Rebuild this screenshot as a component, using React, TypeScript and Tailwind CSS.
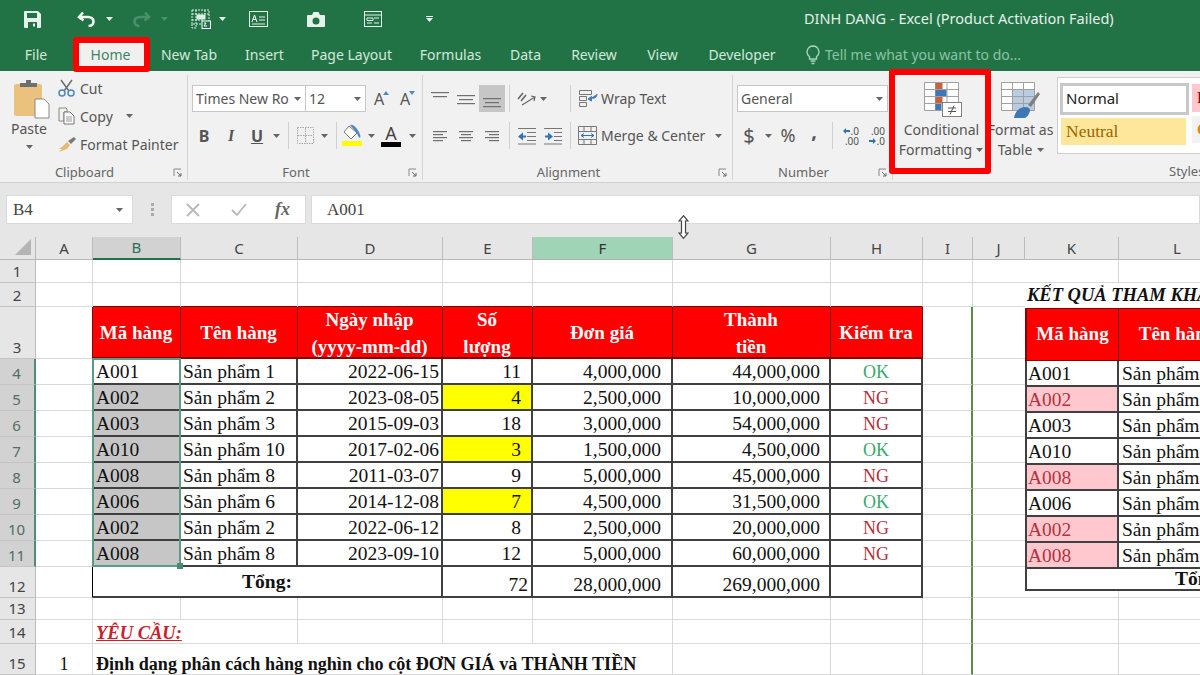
import React from 'react';

const serif = "font-['Liberation_Serif',serif]";
const gridLine = 'border-r border-b border-[#d9d9d9]';
const black = 'border-r-2 border-b-2 border-[#404040]';

const rows = [
  ['A001', 'Sản phẩm 1', '2022-06-15', '11', '4,000,000', '44,000,000', 'OK'],
  ['A002', 'Sản phẩm 2', '2023-08-05', '4', '2,500,000', '10,000,000', 'NG'],
  ['A003', 'Sản phẩm 3', '2015-09-03', '18', '3,000,000', '54,000,000', 'NG'],
  ['A010', 'Sản phẩm 10', '2017-02-06', '3', '1,500,000', '4,500,000', 'OK'],
  ['A008', 'Sản phẩm 8', '2011-03-07', '9', '5,000,000', '45,000,000', 'NG'],
  ['A006', 'Sản phẩm 6', '2014-12-08', '7', '4,500,000', '31,500,000', 'OK'],
  ['A002', 'Sản phẩm 2', '2022-06-12', '8', '2,500,000', '20,000,000', 'NG'],
  ['A008', 'Sản phẩm 8', '2023-09-10', '12', '5,000,000', '60,000,000', 'NG'],
];

const lookup = [
  ['A001', false],
  ['A002', true],
  ['A003', false],
  ['A010', false],
  ['A008', true],
  ['A006', false],
  ['A002', true],
  ['A008', true],
] as const;

const tabs = [
  { name: 'New Tab', w: 'w-[86px]' },
  { name: 'Insert', w: 'w-[65px]' },
  { name: 'Page Layout', w: 'w-[109px]' },
  { name: 'Formulas', w: 'w-[89px]' },
  { name: 'Data', w: 'w-[61px]' },
  { name: 'Review', w: 'w-[76px]' },
  { name: 'View', w: 'w-[61px]' },
  { name: 'Developer', w: 'w-[98px]' },
];

function Caret({ color = '#666' }: { color?: string }) {
  return (
    <svg width="7" height="4" viewBox="0 0 7 4" className="shrink-0">
      <path d="M0 0h7L3.5 4z" fill={color} />
    </svg>
  );
}

function Launcher() {
  return (
    <svg width="10" height="10" viewBox="0 0 10 10" className="justify-self-end mr-[4px]">
      <path d="M1 8V1h7" fill="none" stroke="#888" />
      <path d="M4 4l4 4M8 5v3H5" fill="none" stroke="#666" />
    </svg>
  );
}

function Divider() {
  return <div className="w-px h-[27px] bg-[#d0d0d0] shrink-0" />;
}

function Lines({ rows }: { rows: number[][] }) {
  return (
    <svg width="20" height="20" viewBox="0 0 20 20">
      {rows.map(([x, y, w], i) => (
        <rect key={i} x={x} y={y} width={w} height="1.2" fill="#707070" />
      ))}
    </svg>
  );
}

function Tool({ active, children }: { active?: boolean; children: React.ReactNode }) {
  return (
    <div className={`w-[26px] h-[27px] flex items-center justify-center shrink-0 ${active ? 'bg-[#c6c6c6]' : ''}`}>
      {children}
    </div>
  );
}

function Group({ label, launcher, className, children }: { label: string; launcher?: boolean; className: string; children: React.ReactNode }) {
  return (
    <div className={`h-[105px] flex flex-col border-r border-[#d4d4d4] shrink-0 ${className}`}>
      <div className="h-[88px]">{children}</div>
      <div className="h-[16px] grid grid-cols-[minmax(0,1fr)_auto_minmax(0,1fr)_18px] items-center text-[13px] text-[#666]">
        <span />
        <span>{label}</span>
        <span />
        {launcher && <Launcher />}
      </div>
    </div>
  );
}

function TitleBar() {
  return (
    <div className="h-[38px] bg-[#217346] flex items-center text-white">
      <svg width="17" height="17" viewBox="0 0 17 17" className="ml-[24px] shrink-0">
        <path fillRule="evenodd" d="M1 0h13l3 3v13a1 1 0 0 1-1 1H1a1 1 0 0 1-1-1V1a1 1 0 0 1 1-1zm2 2v5h10V2zM4 11v6h9v-6z" fill="#e8f2ec" />
        <rect x="9" y="12.5" width="2" height="3" fill="#e8f2ec" />
      </svg>
      <svg width="19" height="17" viewBox="0 0 19 17" className="ml-[36px] shrink-0">
        <path d="M6 1.5L2 6l4.5 3.5M2.5 6H11c3.5 0 5.5 2 5.5 4.5S14.5 15 11.5 15" fill="none" stroke="#f2f7f4" strokeWidth="2.6" />
      </svg>
      <div className="ml-[10px]"><Caret color="#e8f2ec" /></div>
      <svg width="19" height="17" viewBox="0 0 19 17" className="ml-[19px] shrink-0">
        <path d="M13 1.5L17 6l-4.5 3.5M16.5 6H8c-3.5 0-5.5 2-5.5 4.5S4.5 15 7.5 15" fill="none" stroke="#4c8f6c" strokeWidth="2.6" />
      </svg>
      <div className="ml-[10px]"><Caret color="#4c8f6c" /></div>
      <svg width="20" height="20" viewBox="0 0 20 20" className="ml-[23px] shrink-0">
        <path d="M1 1h17v14H1zM1 5h17M1 11h11M5 1v18M14 1v4M1 15v4h4" fill="none" stroke="#dfeee6" strokeDasharray="2 1" />
        <rect x="5.5" y="5.5" width="9" height="5" fill="#dfeee6" />
        <rect x="11" y="12" width="8.5" height="7.5" fill="#217346" stroke="#fff" />
        <path d="M13 14h2l-2 3h3" fill="none" stroke="#fff" />
      </svg>
      <div className="ml-[8px]"><Caret color="#e8f2ec" /></div>
      <svg width="19" height="16" viewBox="0 0 19 16" className="ml-[23px] shrink-0">
        <rect x=".5" y=".5" width="18" height="15" fill="none" stroke="#e8f2ec" />
        <path d="M3 11l2.5-7L8 11M4 8.5h3" fill="none" stroke="#fff" />
        <path d="M10 6h6M10 9h6M3 13h13" stroke="#e8f2ec" />
      </svg>
      <svg width="18" height="15" viewBox="0 0 18 15" className="ml-[39px] shrink-0">
        <path fillRule="evenodd" d="M1 3h4l1.5-3h5L13 3h4a1 1 0 0 1 1 1v10a1 1 0 0 1-1 1H1a1 1 0 0 1-1-1V4a1 1 0 0 1 1-1zm8 2.5a3.5 3.5 0 1 0 0 7 3.5 3.5 0 0 0 0-7z" fill="#e8f2ec" />
      </svg>
      <svg width="18" height="16" viewBox="0 0 18 16" className="ml-[39px] shrink-0">
        <rect x=".5" y=".5" width="17" height="15" fill="none" stroke="#e8f2ec" />
        <path d="M1 4h16M3 7h6v2.5H3zM10 7h5M3 12h5M10 12h5" fill="none" stroke="#e8f2ec" />
      </svg>
      <div className="ml-[44px] flex flex-col items-center gap-[1px]">
        <div className="w-[7px] h-px bg-[#e8f2ec]" />
        <Caret color="#e8f2ec" />
      </div>
      <span className="ml-[371px] text-[14.5px] text-[#e4f0e9] whitespace-nowrap">DINH DANG - Excel (Product Activation Failed)</span>
    </div>
  );
}

function TabBar() {
  return (
    <div className="h-[33px] bg-[#217346] flex items-center text-[14px] text-[#d3e8da]">
      <div className="ml-[10px] w-[52px] text-center">File</div>
      <div className="ml-[11px] w-[73px] h-full relative flex items-center">
        <div className="absolute left-0 top-[-1px] w-[77px] h-[35px] border-[6px] border-[#f00] rounded-[3px] bg-[#f0f0f0]" />
        <span className="relative w-full text-center pl-[2px] text-[#3f8563]">Home</span>
      </div>
      {tabs.map((t) => (
        <div key={t.name} className={`${t.w} text-center`}>{t.name}</div>
      ))}
      <svg width="14" height="20" viewBox="0 0 14 20" className="ml-[15px] shrink-0">
        <path d="M7 1a6 6 0 0 0-3.5 10.8V14h7v-2.2A6 6 0 0 0 7 1zM4.5 16h5M5.5 18.500h3" fill="none" stroke="#a5d3b8" strokeWidth="1.4" />
      </svg>
      <span className="ml-[5px] text-[#8ac3a2] whitespace-nowrap">Tell me what you want to do...</span>
    </div>
  );
}

function Clipboard() {
  return (
    <Group label="Clipboard" launcher className="w-[188px]">
      <div className="flex h-full">
        <div className="w-[58px] flex flex-col items-center pt-[4px]">
          <svg width="36" height="40" viewBox="0 0 36 40" className="ml-[6px]">
            <rect x="0" y="5" width="28" height="32" rx="2" fill="#eac27d" />
            <path d="M6 8V4h6V1h5v3h6v4z" fill="#6f6f6f" />
            <path d="M21 20h9l5 5v14H21z" fill="#fff" stroke="#888" />
          </svg>
          <span className="text-[14px] leading-[20px] text-[#555]">Paste</span>
          <div className="mt-[6px]"><Caret /></div>
        </div>
        <div className="flex flex-col -mt-[1px] text-[14px] text-[#555]">
          <div className="h-[28px] flex items-center gap-[5px]">
            <svg width="17" height="18" viewBox="0 0 17 18">
              <path d="M3 1l8 11M14 1L6 12" stroke="#6f6f6f" strokeWidth="1.5" fill="none" />
              <circle cx="4" cy="14" r="3" fill="none" stroke="#4f86c0" strokeWidth="1.5" />
              <circle cx="13" cy="14" r="3" fill="none" stroke="#4f86c0" strokeWidth="1.5" />
            </svg>
            <span>Cut</span>
          </div>
          <div className="h-[28px] flex items-center gap-[5px]">
            <svg width="17" height="18" viewBox="0 0 17 18">
              <path d="M1 1h7l1 1v3H6v9H1z" fill="#f1f1f1" stroke="#888" />
              <path d="M6 5h6l4 4v8H6z" fill="#fff" stroke="#777" />
              <path d="M8 10h6M8 12h6M8 14h6" stroke="#999" />
            </svg>
            <span>Copy</span>
            <div className="ml-[8px]"><Caret /></div>
          </div>
          <div className="h-[28px] flex items-center gap-[4px]">
            <svg width="18" height="17" viewBox="0 0 18 17">
              <path d="M10 5l3 3 5-5-2-2z" fill="#7a7a7a" />
              <path d="M9 6l3 3-3 4-8 3 3-3-3 0 4-3z" fill="#e8b96f" />
            </svg>
            <span>Format Painter</span>
          </div>
        </div>
      </div>
    </Group>
  );
}

function FontGroup() {
  return (
    <Group label="Font" launcher className="w-[235px]">
      <div className="pt-[10px] pl-[4px]">
        <div className="flex items-center h-[27px] text-[14px] text-[#555]">
          <div className="w-[114px] h-full bg-white border border-[#c6c6c6] flex items-center justify-between pl-[3px] pr-[4px]">
            <span className="whitespace-nowrap">Times New Ro</span>
            <Caret />
          </div>
          <div className="w-[60px] h-full bg-white border border-l-0 border-[#c6c6c6] flex items-center justify-between pl-[3px] pr-[4px]">
            <span>12</span>
            <Caret />
          </div>
          <div className="ml-[8px] w-[16px] flex items-start text-[16px] leading-none">
            <span>A</span>
            <svg width="6" height="4" viewBox="0 0 6 4" className="-ml-[1px]"><path d="M0 4l3-4 3 4z" fill="#4f86c0" /></svg>
          </div>
          <div className="ml-[10px] w-[16px] flex items-start text-[16px] leading-none">
            <span>A</span>
            <svg width="6" height="4" viewBox="0 0 6 4" className="-ml-[1px]"><path d="M0 0l3 4 3-4z" fill="#4f86c0" /></svg>
          </div>
        </div>
        <div className="flex items-center h-[27px] mt-[10px] -ml-[1px] text-[#555]">
          <Tool><span className="font-bold text-[16px]">B</span></Tool>
          <div className="w-px" />
          <Tool><span className={`italic font-bold text-[16px] ${serif}`}>I</span></Tool>
          <Tool><span className="font-bold text-[16px] underline">U</span></Tool>
          <div className="w-[12px] flex justify-center"><Caret /></div>
          <div className="ml-[6px]"><Divider /></div>
          <div className="ml-[3px]">
            <Tool>
              <svg width="17" height="17" viewBox="0 0 17 17">
                <path d="M.5.5h16v16H.5zM8.5 1v15M1 8.5h15" fill="none" stroke="#a8a8a8" strokeDasharray="1.5 1" />
              </svg>
            </Tool>
          </div>
          <div className="w-[12px] flex justify-center"><Caret /></div>
          <div className="ml-[6px]"><Divider /></div>
          <div className="ml-[2px]">
            <Tool>
              <svg width="22" height="24" viewBox="0 0 22 24">
                <path d="M8 2l8 7-6 6-7-7z" fill="#fff" stroke="#777" />
                <path d="M9 1c3-1 6 2 9 7 1 3 2 4 1 6-2-1-2-3-3-5z" fill="#4f86c0" />
                <rect x="1" y="17" width="20" height="5" fill="#ff0" />
              </svg>
            </Tool>
          </div>
          <div className="w-[13px] flex justify-center"><Caret /></div>
          <Tool>
            <div className="flex flex-col items-center text-[#444]">
              <span className="text-[18px] leading-[18px]">A</span>
              <div className="w-[20px] h-[5px] bg-black" />
            </div>
          </Tool>
          <div className="w-[16px] flex justify-center"><Caret /></div>
        </div>
      </div>
    </Group>
  );
}

function Alignment() {
  return (
    <Group label="Alignment" launcher className="w-[310px]">
      <div className="pt-[10px] pl-[4px] text-[14px] text-[#555]">
        <div className="flex items-center h-[27px]">
          <Tool><Lines rows={[[1, 3, 18], [3, 7, 14]]} /></Tool>
          <Tool><Lines rows={[[1, 6, 18], [3, 10, 14], [1, 14, 18]]} /></Tool>
          <Tool active><Lines rows={[[1, 9, 18], [3, 13, 14], [1, 17, 18]]} /></Tool>
          <div className="ml-[4px]"><Divider /></div>
          <svg width="19" height="19" viewBox="0 0 19 19" className="ml-[7px]">
            <path d="M1 10l5-6M4 12l5-6" stroke="#666" strokeWidth="1.6" />
            <path d="M5 16L18 8M14 7l4 1-1 4" fill="none" stroke="#666" strokeWidth="1.2" />
          </svg>
          <div className="ml-[4px]"><Caret /></div>
          <div className="ml-[23px]"><Divider /></div>
          <svg width="20" height="20" viewBox="0 0 20 20" className="ml-[8px]">
            <path d="M.5 1.5h12v4H.5zM.5 7.5h7v4h-7zM.5 13.5h7v4h-7zM8 5.5h4" fill="none" stroke="#777" />
            <path d="M12 9c5 1 6-2 6-4M9 10l3.5-2.5V12z" fill="#3e7cbb" stroke="#3e7cbb" />
          </svg>
          <span className="ml-[2px]">Wrap Text</span>
        </div>
        <div className="flex items-center h-[27px] mt-[10px]">
          <Tool><Lines rows={[[3, 5, 14], [3, 8, 10], [3, 11, 14], [3, 14, 10]]} /></Tool>
          <Tool><Lines rows={[[3, 5, 14], [5, 8, 10], [3, 11, 14], [5, 14, 10]]} /></Tool>
          <Tool><Lines rows={[[3, 5, 14], [7, 8, 10], [3, 11, 14], [7, 14, 10]]} /></Tool>
          <div className="ml-[4px]"><Divider /></div>
          <svg width="18" height="18" viewBox="0 0 18 18" className="ml-[8px]">
            <path d="M0 1.5h18M9 5.5h9M9 9.5h9M9 13.5h9M0 17h18" stroke="#777" />
            <path d="M0 9.5l5-4v3h3v2H5v3z" fill="#2f74b5" />
          </svg>
          <svg width="18" height="18" viewBox="0 0 18 18" className="ml-[8px]">
            <path d="M0 1.5h18M10 5.5h8M10 9.5h8M10 13.5h8M0 17h18" stroke="#777" />
            <path d="M9 9.5l-5-4v3H1v2h3v3z" fill="#2f74b5" />
          </svg>
          <div className="ml-[8px]"><Divider /></div>
          <svg width="19" height="19" viewBox="0 0 19 19" className="ml-[7px]">
            <path d="M.5.5h18v18H.5zM1 5.5h17M1 13.5h17M6 1v4M13 1v4M6 14v4M13 14v4" fill="none" stroke="#777" />
            <path d="M3 9.5h13M3 9.5l3-2M3 9.5l3 2M16 9.5l-3-2M16 9.5l-3 2" fill="none" stroke="#2f74b5" />
          </svg>
          <span className="ml-[4px] whitespace-nowrap">Merge &amp; Center</span>
          <div className="ml-[10px]"><Caret /></div>
        </div>
      </div>
    </Group>
  );
}

function ArrowSmall({ flip }: { flip?: boolean }) {
  return (
    <svg width="7" height="6" viewBox="0 0 7 6" className={flip ? 'rotate-180 mr-[1px]' : 'mr-[1px]'}>
      <path d="M0 3l3-3v2h4v2H3v2z" fill="#2f74b5" />
    </svg>
  );
}

function NumberGroup() {
  return (
    <Group label="Number" launcher className="w-[160px]">
      <div className="pt-[10px] pl-[4px] text-[#555]">
        <div className="w-[151px] h-[27px] bg-white border border-[#c6c6c6] flex items-center justify-between pl-[3px] pr-[4px] text-[14px]">
          <span>General</span>
          <Caret />
        </div>
        <div className="flex items-center h-[27px] mt-[10px]">
          <div className="w-[24px] text-center text-[20px]">$</div>
          <div className="w-[14px] flex justify-center"><Caret /></div>
          <div className="w-[26px] text-center text-[18px]">%</div>
          <div className="w-[26px] text-center text-[20px] font-bold leading-[16px] pb-[10px]">,</div>
          <div className="ml-[5px]"><Divider /></div>
          <div className="ml-[9px] w-[17px] flex flex-col items-end text-[10px] leading-[10px] whitespace-nowrap">
            <span className="flex items-center"><ArrowSmall />.0</span>
            <span>.00</span>
          </div>
          <div className="ml-[9px] w-[17px] flex flex-col items-end text-[10px] leading-[10px] whitespace-nowrap">
            <span>.00</span>
            <span className="flex items-center"><ArrowSmall flip />.0</span>
          </div>
        </div>
      </div>
    </Group>
  );
}

function Styles() {
  return (
    <div className="flex text-[14px] leading-[20px] text-[#555] h-[105px]">
      <div className="relative w-[92px] shrink-0 flex flex-col items-center pt-[7px] pl-[5px]">
        <div className="absolute left-[-4px] top-[-6px] w-[102px] h-[105px] border-[6px] border-[#f00] rounded-[3px]" />
        <svg width="38" height="36" viewBox="0 0 38 36" className="ml-[3px] mb-[2px]">
          <path d="M.5.5h34v28H.5zM11.5 1v27M23 1v27M1 7.5h33M1 14.5h33M1 21.5h33" fill="#fff" stroke="#a0a0a0" />
          <rect x="11.5" y="1" width="7" height="6" fill="#c9623c" />
          <rect x="11.5" y="8" width="11" height="6" fill="#3d78b5" />
          <rect x="11.5" y="15" width="7" height="6" fill="#c9623c" />
          <rect x="11.5" y="22" width="6" height="6" fill="#3d78b5" />
          <rect x="18.5" y="20.5" width="19" height="14" fill="#fff" stroke="#808080" />
          <path d="M24 26h8M24 29.5h8M30 23.5l-4 9" fill="none" stroke="#555" />
        </svg>
        <span className="whitespace-nowrap">Conditional</span>
        <div className="flex items-center gap-[4px] -ml-[1px]">
          <span>Formatting</span>
          <Caret />
        </div>
      </div>
      <div className="w-[72px] shrink-0 flex flex-col items-center pt-[7px] overflow-hidden">
        <svg width="40" height="36" viewBox="0 0 40 36" className="mb-[2px]">
          <path d="M.5.5h33v28H.5z" fill="#fff" stroke="#a0a0a0" />
          <rect x="12" y="8" width="21" height="20" fill="#b9cde2" />
          <path d="M11.5 1v27M22.5 1v27M1 7.5h32M1 14.5h32M1 21.5h32" stroke="#a0a0a0" />
          <path d="M27 23L37 10l2 2-9 13z" fill="#7f7f7f" />
          <path d="M13 36c1-6 5-11 11-11 3 0 5 1 5 3 0 3-3 8-6 8z" fill="#3d78b5" />
        </svg>
        <span className="whitespace-nowrap -ml-[1px]">Format as</span>
        <div className="flex items-center gap-[5px]">
          <span>Table</span>
          <Caret />
        </div>
      </div>
      <div className="flex-1 flex flex-col min-w-0">
        <div className="mt-[2px] h-[77px] bg-white border border-r-0 border-[#cfcfcf] flex pl-[2px] overflow-hidden">
          <div className="w-[129px] shrink-0 pt-[5px]">
            <div className="h-[32px] border-[3px] border-[#c8c8c8] flex items-center pl-[3px] pb-[2px] text-[15px] text-[#222]">Normal</div>
            <div className={`mt-[3px] ml-[1px] w-[125px] h-[27px] bg-[#fee79a] flex items-center pl-[5px] pb-[2px] text-[17.5px] text-[#9c6500] ${serif}`}>Neutral</div>
          </div>
          <div className="ml-[3px] w-[40px] shrink-0 pt-[6px]">
            <div className={`h-[28px] bg-[#ffc7ce] flex items-center pl-[5px] text-[16px] text-[#9c0006] ${serif}`}>B</div>
            <div className={`mt-[4px] h-[27px] bg-[#f2f2f2] flex items-center pl-[5px] text-[16px] text-[#e8830c] font-bold ${serif}`}>C</div>
          </div>
        </div>
        <div className="mt-[9px] pl-[112px] text-[13px] leading-[16px] text-[#666]">Styles</div>
      </div>
    </div>
  );
}

function FormulaBar() {
  return (
    <div className="h-[29px] flex mt-[12px] mb-[13px]">
      <div className="ml-[6px] w-[127px] bg-white border border-[#dadada] flex items-center justify-between pl-[6px] pr-[9px]">
        <span className={`text-[17px] text-[#444] ${serif}`}>B4</span>
        <Caret />
      </div>
      <div className="w-[38px] flex flex-col items-center justify-center gap-[2px]">
        <div className="w-[3px] h-[3px] bg-[#aaa]" />
        <div className="w-[3px] h-[3px] bg-[#aaa]" />
        <div className="w-[3px] h-[3px] bg-[#aaa]" />
      </div>
      <div className="w-[135px] bg-white border border-[#dadada] flex items-center">
        <svg width="14" height="14" viewBox="0 0 14 14" className="ml-[14px]">
          <path d="M1 1l12 12M13 1L1 13" stroke="#b8b8b8" strokeWidth="1.8" />
        </svg>
        <svg width="16" height="14" viewBox="0 0 16 14" className="ml-[31px]">
          <path d="M1 7l5 5 9-11" fill="none" stroke="#b8b8b8" strokeWidth="1.8" />
        </svg>
        <span className={`ml-[28px] italic font-bold text-[18px] text-[#666] ${serif}`}>fx</span>
      </div>
      <div className="ml-[5px] flex-1 bg-white border border-[#dadada] flex items-center pl-[15px]">
        <span className={`text-[17px] text-[#444] ${serif}`}>A001</span>
      </div>
    </div>
  );
}

function ColHead({ label, sel, hover, className }: { label: string; sel?: boolean; hover?: boolean; className?: string }) {
  const tone = sel
    ? 'bg-[#d2d2d2] border-b-2 border-b-[#217346] text-[#2f6f52]'
    : hover
      ? 'bg-[#9fd4b6] border-b border-b-[#b0b0b0] text-[#333]'
      : 'bg-[#e6e6e6] border-b border-b-[#b8b8b8] text-[#444]';
  return (
    <div className={`flex items-center justify-center text-[15px] font-['Noto_Sans',sans-serif] border-r border-r-[#bcbcbc] ${tone} ${className ?? ''}`}>
      {label}
    </div>
  );
}

function RowHead({ n, sel }: { n: number; sel?: boolean }) {
  return (
    <div
      className={`flex items-end justify-center text-[15px] leading-[21px] pr-[1px] font-['Noto_Sans',sans-serif] border-b border-b-[#c4c4c4] ${
        sel ? 'bg-[#d2d2d2] border-r-2 border-r-[#4f8d73] text-[#4f6f60]' : 'bg-[#e6e6e6] border-r border-r-[#bcbcbc] text-[#444]'
      }`}
    >
      {n}
    </div>
  );
}

function Blank({ className }: { className?: string }) {
  return <div className={`${gridLine} ${className ?? ''}`} />;
}

const iLine = 'border-r-2 border-r-[#5c8a48]';

function RightTable() {
  return (
    <div className="flex flex-col w-[211px] shrink-0">
      <div className="flex h-[23px]">
        <ColHead label="K" className="w-[94px]" />
        <ColHead label="L" className="w-[117px]" />
      </div>
      <div className="flex h-[23px] bg-white">
        <Blank className="w-[94px]" />
        <Blank className="w-[117px]" />
      </div>
      <div className="h-[25px] bg-white flex items-center pl-[2px] font-bold italic text-[18.5px] whitespace-nowrap">KẾT QUẢ THAM KHẢO</div>
      <div className="flex h-[53px] bg-[#ff0000] text-white font-bold text-[19px] border-l-2 border-t border-[#7a0a0a]">
        <div className="w-[92px] flex items-center justify-center border-r border-b border-[#7a0a0a]">Mã hàng</div>
        <div className="w-[117px] flex items-center justify-center border-r border-b border-[#7a0a0a] whitespace-nowrap">Tên hàng</div>
      </div>
      {lookup.map(([code, bad], i) => (
        <div key={i} className="flex h-[26px] bg-white border-l-2 border-[#404040]">
          <div className={`w-[92px] ${black} flex items-center pl-[1px] pt-[1px] ${bad ? 'bg-[#ffc7ce] text-[#b4323c]' : ''}`}>{code}</div>
          <div className={`w-[117px] ${black} flex items-center pl-[3px] pt-[1px] whitespace-nowrap`}>{'Sản phẩm ' + ['1', '2', '3', '10', '8', '6', '2', '8'][i]}</div>
        </div>
      ))}
      <div className="h-[22px] bg-white border-l-2 border-b-2 border-[#404040] flex items-center pl-[148px] font-bold whitespace-nowrap">Tổng:</div>
      {['h-[7px]', 'h-[22px]', 'h-[24px]', 'h-[31px]'].map((h) => (
        <div key={h} className={`flex bg-white ${h}`}>
          <Blank className="w-[94px]" />
          <Blank className="w-[117px]" />
        </div>
      ))}
    </div>
  );
}

function Sheet() {
  const heads = ['Mã hàng', 'Tên hàng', 'Ngày nhập\n(yyyy-mm-dd)', 'Số\nlượng', 'Đơn giá', 'Thành\ntiền', 'Kiểm tra'];
  return (
    <div className={`flex text-[19.5px] text-[#111] ${serif}`}>
      <div className="relative w-[1025px] shrink-0 grid grid-cols-[36px_57px_88px_117px_145px_90px_140px_158px_92px_50px_52px] grid-rows-[23px_23px_24px_52px_repeat(8,26px)_31px_22px_24px_31px] bg-white">
        <div className="relative bg-[#e6e6e6] border-r border-b border-[#b8b8b8]">
          <svg width="18" height="18" viewBox="0 0 18 18" className="absolute right-[2px] bottom-[2px]">
            <path d="M16 0v16H0z" fill="#b4b4b4" />
          </svg>
        </div>
        <ColHead label="A" />
        <ColHead label="B" sel />
        <ColHead label="C" />
        <ColHead label="D" />
        <ColHead label="E" />
        <ColHead label="F" hover />
        <ColHead label="G" />
        <ColHead label="H" />
        <ColHead label="I" />
        <ColHead label="J" />

        {[1, 2].map((n) => (
          <React.Fragment key={n}>
            <RowHead n={n} />
            <Blank />
            {[0, 1, 2, 3, 4, 5, 6].map((c) => (
              <Blank key={c} className={n === 2 ? 'border-b-[#7a0a0a]' : ''} />
            ))}
            <Blank />
            <Blank className="border-r-0" />
          </React.Fragment>
        ))}

        <RowHead n={3} />
        <Blank className="border-r-[#7a0a0a]" />
        {heads.map((h) => (
          <div key={h} className="bg-[#ff0000] text-white font-bold text-[19px] leading-[27px] whitespace-pre-line text-center flex items-center justify-center pt-[1px] pr-[1px] border-r border-b-2 border-[#7a0a0a]">
            {h}
          </div>
        ))}
        <Blank className={iLine} />
        <Blank className="border-r-0" />

        {rows.map((r, i) => (
          <React.Fragment key={i}>
            <RowHead n={i + 4} sel />
            <Blank className="border-r-black" />
            <div className={`${black} flex items-center pl-[3px] pt-[2px] ${i > 0 ? 'bg-[#c6c6c6]' : ''}`}>{r[0]}</div>
            <div className={`${black} flex items-center pl-[2px] pt-[2px]`}>{r[1]}</div>
            <div className={`${black} flex items-center justify-end pr-[2px] pt-[2px]`}>{r[2]}</div>
            <div className={`${black} flex items-center justify-end pr-[10px] pt-[2px] ${i === 1 || i === 3 || i === 5 ? 'bg-[#ffff00]' : ''}`}>{r[3]}</div>
            <div className={`${black} flex items-center justify-end pr-[10px] pt-[2px]`}>{r[4]}</div>
            <div className={`${black} flex items-center justify-end pr-[9px] pt-[2px]`}>{r[5]}</div>
            <div className={`${black} flex items-center justify-center pt-[3px] text-[18px] ${r[6] === 'OK' ? 'text-[#3aa76d]' : 'text-[#b4323c]'}`}>{r[6]}</div>
            <Blank className={iLine} />
            <Blank className="border-r-0" />
          </React.Fragment>
        ))}

        <RowHead n={12} />
        <Blank className="border-r-black" />
        <div className={`${black} col-span-3 flex items-start justify-center font-bold`}>Tổng:</div>
        <div className={`${black} flex items-end justify-end pr-[3px] leading-[22px]`}>72</div>
        <div className={`${black} flex items-end justify-end pr-[10px] leading-[22px]`}>28,000,000</div>
        <div className={`${black} flex items-end justify-end pr-[9px] leading-[22px]`}>269,000,000</div>
        <div className={black} />
        <Blank className={iLine} />
        <Blank className="border-r-0" />

        <RowHead n={13} />
        {[0, 1, 2, 3, 4, 5, 6, 7].map((c) => <Blank key={c} />)}
        <Blank className={iLine} />
        <Blank className="border-r-0" />

        <RowHead n={14} />
        <Blank />
        <div className={`${gridLine} col-span-2 pl-[3px] font-bold italic underline text-[18.5px] leading-[20px] text-[#c8202c] flex items-end`}>YÊU CẦU:</div>
        {[0, 1, 2, 3, 4].map((c) => <Blank key={c} />)}
        <Blank className={iLine} />
        <Blank className="border-r-0" />

        <RowHead n={15} />
        <div className={`${gridLine} flex items-end justify-center leading-[20px] text-[18px]`}>1</div>
        <div className={`${gridLine} col-span-5 pl-[3px] font-bold text-[18.1px] flex items-end whitespace-nowrap leading-[20px]`}>Định dạng phân cách hàng nghìn cho cột ĐƠN GIÁ và THÀNH TIỀN</div>
        <Blank />
        <Blank />
        <Blank className={iLine} />
        <Blank className="border-r-0" />

        {/* vung chon B4:B11 */}
        <div className="absolute inset-0 col-start-3 col-end-4 row-start-5 row-end-13 border-2 border-[#5b9c84] -ml-px -mt-px pointer-events-none">
          <div className="absolute -right-[4px] -bottom-[4px] w-[6px] h-[6px] bg-[#4a8a74]" />
        </div>
      </div>

      <RightTable />
    </div>
  );
}

export default function App() {
  return (
    <div className="relative w-[1200px] h-[675px] overflow-hidden bg-[#e6e6e6] font-['Noto_Sans',sans-serif]">
      <TitleBar />
      <TabBar />
      <div className="h-[112px] bg-[#f1f1f1] border-b border-[#d0d0d0] pt-[4px] flex">
        <Clipboard />
        <FontGroup />
        <Alignment />
        <NumberGroup />
        <Styles />
      </div>
      <FormulaBar />
      <Sheet />
      {/* con tro chuot */}
      <svg width="11" height="24" viewBox="0 0 11 24" className="absolute left-[678px] top-[215px]">
        <path d="M5.5.7L10 6H7.5v12H10l-4.5 5.3L1 18h2.5V6H1z" fill="#fff" stroke="#444" strokeWidth="1.2" />
      </svg>
    </div>
  );
}
